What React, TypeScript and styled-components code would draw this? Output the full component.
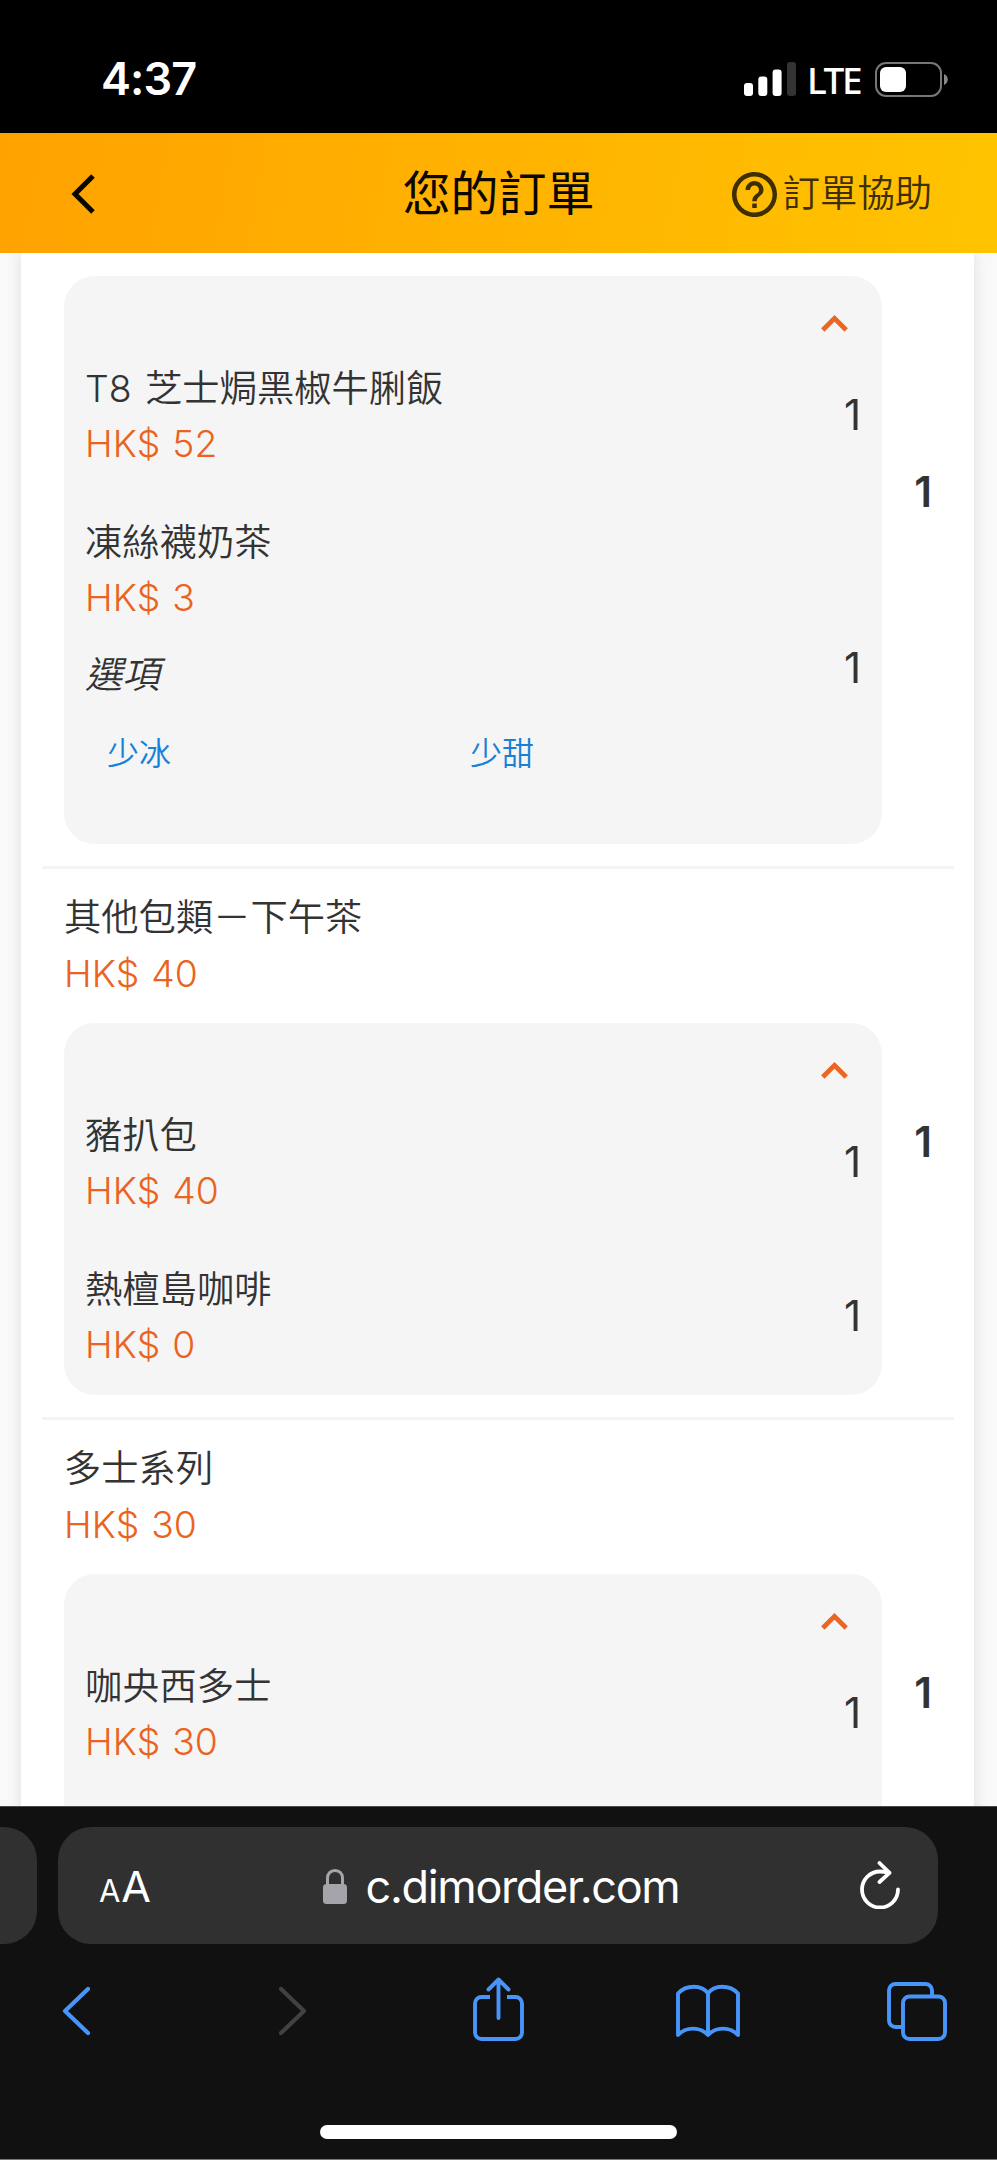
import React from 'react';
import styled, { createGlobalStyle } from 'styled-components';

const latin = `Inter, 'Noto Sans CJK TC', sans-serif`;
const cjk = `Inter, 'Noto Sans CJK TC', 'Noto Sans CJK SC', sans-serif`;

const GlobalStyle = createGlobalStyle`
  *, *::before, *::after { box-sizing: border-box; }
  body { margin: 0; background: #111; }
  svg { display: block; flex: none; }
`;

const Screen = styled.div`
  display: flex;
  flex-direction: column;
  width: 997px;
  height: 2160px;
  overflow: hidden;
  font-family: ${cjk};
`;

const StatusBar = styled.header`
  display: flex;
  align-items: center;
  justify-content: space-between;
  flex: none;
  height: 133px;
  padding: 25px 49px 0 101px;
  background: #000;
  color: #fff;
  font-family: ${latin};
`;

const Clock = styled.span`
  font-size: 45px;
  font-weight: 600;
  line-height: 54px;
  letter-spacing: -0.9px;
`;

const Signals = styled.div`
  display: flex;
  align-items: center;
`;

const Network = styled.span`
  width: 54px;
  margin: 1px 14px 0 11px;
  font-family: 'Noto Sans', sans-serif;
  font-size: 37px;
  font-weight: 500;
  line-height: 44px;
  letter-spacing: -2.4px;
  white-space: nowrap;
`;

const TitleBar = styled.div`
  display: grid;
  grid-template-columns: 1fr auto 1fr;
  align-items: center;
  flex: none;
  height: 120px;
  padding: 2px 65px 0 71px;
  background: linear-gradient(100deg, #ffa200 0%, #ffc400 100%);
`;

const Title = styled.h1`
  margin: 0 0 0 -6px;
  font-size: 48px;
  font-weight: 400;
  line-height: 60px;
  color: #0a0700;
`;

const Help = styled.button`
  display: flex;
  align-items: center;
  justify-self: end;
  gap: 6px;
  padding: 0;
  border: 0;
  background: none;
  color: #3f2f00;
  font: 350 37.3px/56px ${cjk};
`;

const Viewport = styled.main`
  flex: none;
  height: 1553px;
  padding: 0 23px 0 21px;
  overflow: hidden;
  background: #f9f9f9;
`;

const Sheet = styled.div`
  display: flex;
  flex-direction: column;
  min-height: 1740px;
  padding: 0 20px 0 21px;
  background: #fff;
  box-shadow: 0 0 14px rgba(0, 0, 0, 0.11);
`;

const Group = styled.section<{ $divided?: boolean }>`
  display: grid;
  grid-template-columns: 818px 1fr;
  padding: ${(p) => (p.$divided ? '21px' : '23px')} 0 22px 22px;
  border-top: ${(p) => (p.$divided ? '3px solid #f4f4f4' : '0')};
`;

const GroupHead = styled.div`
  padding-bottom: 22px;
`;

const Name = styled.div`
  font-size: 37.3px;
  font-weight: 350;
  line-height: 55.5px;
  word-spacing: 3px;
  color: #333;
`;

const Price = styled.div`
  font-family: ${latin};
  font-size: 37.3px;
  font-weight: 330;
  line-height: 55.5px;
  letter-spacing: 0.1px;
  word-spacing: 1.2px;
  color: #ea6321;
`;

const Box = styled.div<{ $height: number }>`
  display: flex;
  flex-direction: column;
  height: ${(p) => p.$height}px;
  padding: 0 21px;
  border-radius: 31px;
  background: #f5f5f5;
`;

const Toggle = styled.div`
  display: flex;
  justify-content: flex-end;
  height: 84.5px;
  padding: 39px 13px 0 0;
`;

const Item = styled.div`
  display: flex;
  align-items: center;
  justify-content: space-between;
  & + & { margin-top: 43.4px; }
`;

const Count = styled.span`
  margin-top: -2px;
  font-family: ${latin};
  font-size: 42px;
  font-weight: 400;
  line-height: 50px;
  color: #333;
`;

const Total = styled.div<{ $lift: number }>`
  display: flex;
  align-items: center;
  justify-content: flex-end;
  padding: 0 22px ${(p) => p.$lift}px 0;
  font-family: ${latin};
  font-size: 42px;
  font-weight: 600;
  line-height: 50px;
  color: #333;
`;

const OptionTitle = styled(Name)`
  margin-top: 21px;
  font-style: italic;
`;

const Options = styled.div`
  display: grid;
  grid-template-columns: 363px 363px;
  padding: 28px 0 45px 22px;
  font-size: 32px;
  font-weight: 350;
  line-height: 48px;
  color: #1780d8;
`;

const BrowserBar = styled.footer`
  display: flex;
  flex-direction: column;
  align-items: center;
  flex: none;
  height: 354px;
  border-top: 1px solid #4a4a4a;
  border-bottom: 1px solid #777;
  background: #111;
`;

const AddressRow = styled.div`
  display: flex;
  align-self: stretch;
  gap: 21px;
  padding-top: 20px;
`;

const PrevTab = styled.div`
  width: 37px;
  height: 117px;
  border-radius: 0 33px 33px 0;
  background: #303030;
`;

const Address = styled.div`
  display: grid;
  grid-template-columns: 1fr auto 1fr;
  align-items: center;
  width: 880px;
  height: 117px;
  padding: 1px 38px 0 41px;
  border-radius: 33px;
  background: #303030;
  color: #fff;
  font-family: ${latin};
`;

const TextSize = styled.span`
  display: flex;
  align-items: baseline;
  margin-top: 4px;
  gap: 2px;
  font-size: 43px;
  font-weight: 400;
  line-height: 54px;
  letter-spacing: -1.2px;
  small { font-size: 31px; }
`;

const Url = styled.div`
  display: flex;
  align-items: center;
  gap: 19px;
  margin-left: 3px;
  margin-top: 1px;
  font-size: 45px;
  line-height: 54px;
  letter-spacing: -1.35px;
`;

const Reload = styled.div`
  justify-self: end;
  margin-top: -3px;
`;

const Toolbar = styled.nav`
  display: grid;
  grid-template-columns: repeat(5, 209px);
  align-items: center;
  justify-items: center;
  height: 76px;
  margin-top: 29px;
`;

const Tool = styled.div<{ $nudge?: number; $rise?: number }>`
  margin-left: ${(p) => (p.$nudge ?? 0) * 2}px;
  margin-bottom: ${(p) => (p.$rise ?? 0) * 2}px;
`;

const HomeIndicator = styled.div`
  width: 357px;
  height: 14px;
  margin-top: 76px;
  border-radius: 7px;
  background: #fff;
`;

const blue = '#4795fb';

const SignalBars = () => (
  <svg width="52" height="34" viewBox="0 0 52 34" fill="#fff">
    <rect x="0" y="21" width="9" height="13" rx="3" />
    <rect x="14.3" y="14.5" width="9" height="19.5" rx="3" />
    <rect x="28.6" y="7.5" width="9" height="26.5" rx="3" />
    <rect x="43" y="0" width="9" height="34" rx="3" fill="#333" />
  </svg>
);

const Battery = () => (
  <svg width="73" height="35" viewBox="0 0 73 35" fill="none">
    <rect x="1" y="1" width="65" height="33" rx="10" stroke="#777" strokeWidth="2" />
    <rect x="5" y="5" width="26" height="25" rx="6" fill="#fff" />
    <path d="M69 12c5 2 5 9 0 11z" fill="#888" />
  </svg>
);

const BackIcon = () => (
  <svg width="24" height="40" viewBox="0 0 24 40" fill="none" stroke="#0a0700" strokeWidth="5">
    <path d="M22 2 4 20l18 18" />
  </svg>
);

const HelpIcon = () => (
  <svg width="45" height="45" viewBox="2 2 20 20" fill="currentColor">
    <path d="M11 18h2v-2h-2v2zm1-16C6.48 2 2 6.48 2 12s4.48 10 10 10 10-4.48 10-10S17.52 2 12 2zm0 18c-4.41 0-8-3.59-8-8s3.59-8 8-8 8 3.59 8 8-3.59 8-8 8zm0-14c-2.21 0-4 1.79-4 4h2c0-1.1.9-2 2-2s2 .9 2 2c0 2-3 1.75-3 5h2c0-2.25 3-2.5 3-5 0-2.21-1.79-4-4-4z" />
  </svg>
);

const ChevronUp = () => (
  <svg width="27" height="17" viewBox="0 0 27 17" fill="none" stroke="#ec6622" strokeWidth="4.8">
    <path d="M1.8 15 13.5 3.4 25.2 15" />
  </svg>
);

const LockIcon = () => (
  <svg width="24" height="35" viewBox="0 0 24 35" fill="none">
    <path d="M4.5 16V9.5C4.5 4.4 7.5 1.5 12 1.5s7.5 2.9 7.5 8V16" stroke="#a5a4aa" strokeWidth="3" />
    <rect x="0" y="15" width="24" height="20" rx="3.5" fill="#a5a4aa" />
  </svg>
);

const ReloadIcon = () => (
  <svg width="40" height="48" viewBox="0 0 40 48" fill="none" stroke="#fff" strokeWidth="3.8" strokeLinecap="round" strokeLinejoin="round">
    <path d="M38 28.5A18 18 0 1 1 20 10.500c3.500 0 6 .5 9 1" />
    <path d="M19.500 2 29.500 11.800 19.500 21" />
  </svg>
);

const NavBack = () => (
  <svg width="28" height="50" viewBox="0 0 28 50" fill="none" stroke={blue} strokeWidth="4.2" strokeLinecap="round" strokeLinejoin="round">
    <path d="M26 3 3 25l23 22" />
  </svg>
);

const NavForward = () => (
  <svg width="28" height="50" viewBox="0 0 28 50" fill="none" stroke="#414141" strokeWidth="4.2" strokeLinecap="round" strokeLinejoin="round">
    <path d="m2 3 23 22L2 47" />
  </svg>
);

const ShareIcon = () => (
  <svg width="51" height="64" viewBox="0 0 51 64" fill="none" stroke={blue} strokeWidth="3.9" strokeLinejoin="round">
    <path d="M17 20H8.500a6.500 6.500 0 0 0-6.500 6.500v29a6.500 6.500 0 0 0 6.500 6.500h34a6.500 6.500 0 0 0 6.500-6.500v-29a6.500 6.500 0 0 0-6.500-6.500H34" />
    <path d="M25.500 41V2.500M15.500 12.500l10-10 10 10" strokeLinecap="round" />
  </svg>
);

const BookIcon = () => (
  <svg width="64" height="54" viewBox="0 0 64 54" fill="none" stroke={blue} strokeWidth="3.9" strokeLinejoin="round">
    <path d="M32 9.500C26 .5 10 .5 2 9.500V51c8-8.500 22-8.500 30 0 8-8.500 22-8.500 30 0V9.500C54 .5 38 .5 32 9.500Z" />
    <path d="M32 9.500V51" />
  </svg>
);

const TabsIcon = () => (
  <svg width="60" height="59" viewBox="0 0 60 59" fill="none" stroke={blue} strokeWidth="3.9">
    <path d="M16 45H8.500A6.500 6.500 0 0 1 2 38.500v-30A6.500 6.500 0 0 1 8.500 2h30A6.500 6.500 0 0 1 45 8.500V14" />
    <rect x="16" y="14.500" width="42" height="42.500" rx="6.500" />
  </svg>
);

type Dish = { name: string; price: number; options?: string[] };
type Order = { title?: string; price?: number; height: number; lift: number; dishes: Dish[] };

const orders: Order[] = [
  {
    height: 568,
    lift: 136,
    dishes: [
      { name: 'T8 芝士焗黑椒牛脷飯', price: 52 },
      { name: '凍絲襪奶茶', price: 3, options: ['少冰', '少甜'] },
    ],
  },
  {
    title: '其他包類－下午茶',
    price: 40,
    height: 372,
    lift: 2,
    dishes: [
      { name: '豬扒包', price: 40 },
      { name: '熱檀島咖啡', price: 0 },
    ],
  },
  { title: '多士系列', price: 30, height: 372, lift: 2, dishes: [{ name: '咖央西多士', price: 30 }] },
];

export default function App() {
  return (
    <Screen>
      <GlobalStyle />
      <StatusBar>
        <Clock>4:37</Clock>
        <Signals>
          <SignalBars />
          <Network>LTE</Network>
          <Battery />
        </Signals>
      </StatusBar>
      <TitleBar>
        <BackIcon />
        <Title>您的訂單</Title>
        <Help>
          <HelpIcon />
          訂單協助
        </Help>
      </TitleBar>
      <Viewport>
        <Sheet>
          {orders.map((order, i) => (
            <Group key={i} $divided={i > 0}>
              <div>
                {order.title && (
                  <GroupHead>
                    <Name>{order.title}</Name>
                    <Price>HK$ {order.price}</Price>
                  </GroupHead>
                )}
                <Box $height={order.height}>
                  <Toggle>
                    <ChevronUp />
                  </Toggle>
                  {order.dishes.map((dish) => (
                    <Item key={dish.name}>
                      <div>
                        <Name>{dish.name}</Name>
                        <Price>HK$ {dish.price}</Price>
                        {dish.options && (
                          <>
                            <OptionTitle>選項</OptionTitle>
                            <Options>
                              {dish.options.map((o) => (
                                <span key={o}>{o}</span>
                              ))}
                            </Options>
                          </>
                        )}
                      </div>
                      <Count>1</Count>
                    </Item>
                  ))}
                </Box>
              </div>
              <Total $lift={order.lift}>1</Total>
            </Group>
          ))}
        </Sheet>
      </Viewport>
      <BrowserBar>
        <AddressRow>
          <PrevTab />
          <Address>
            <TextSize>
              <small>A</small>A
            </TextSize>
            <Url>
              <LockIcon />
              c.dimorder.com
            </Url>
            <Reload>
              <ReloadIcon />
            </Reload>
          </Address>
        </AddressRow>
        <Toolbar>
          <Tool $nudge={-5}>
            <NavBack />
          </Tool>
          <Tool $nudge={3}>
            <NavForward />
          </Tool>
          <Tool $rise={2}>
            <ShareIcon />
          </Tool>
          <Tool>
            <BookIcon />
          </Tool>
          <Tool>
            <TabsIcon />
          </Tool>
        </Toolbar>
        <HomeIndicator />
      </BrowserBar>
    </Screen>
  );
}
